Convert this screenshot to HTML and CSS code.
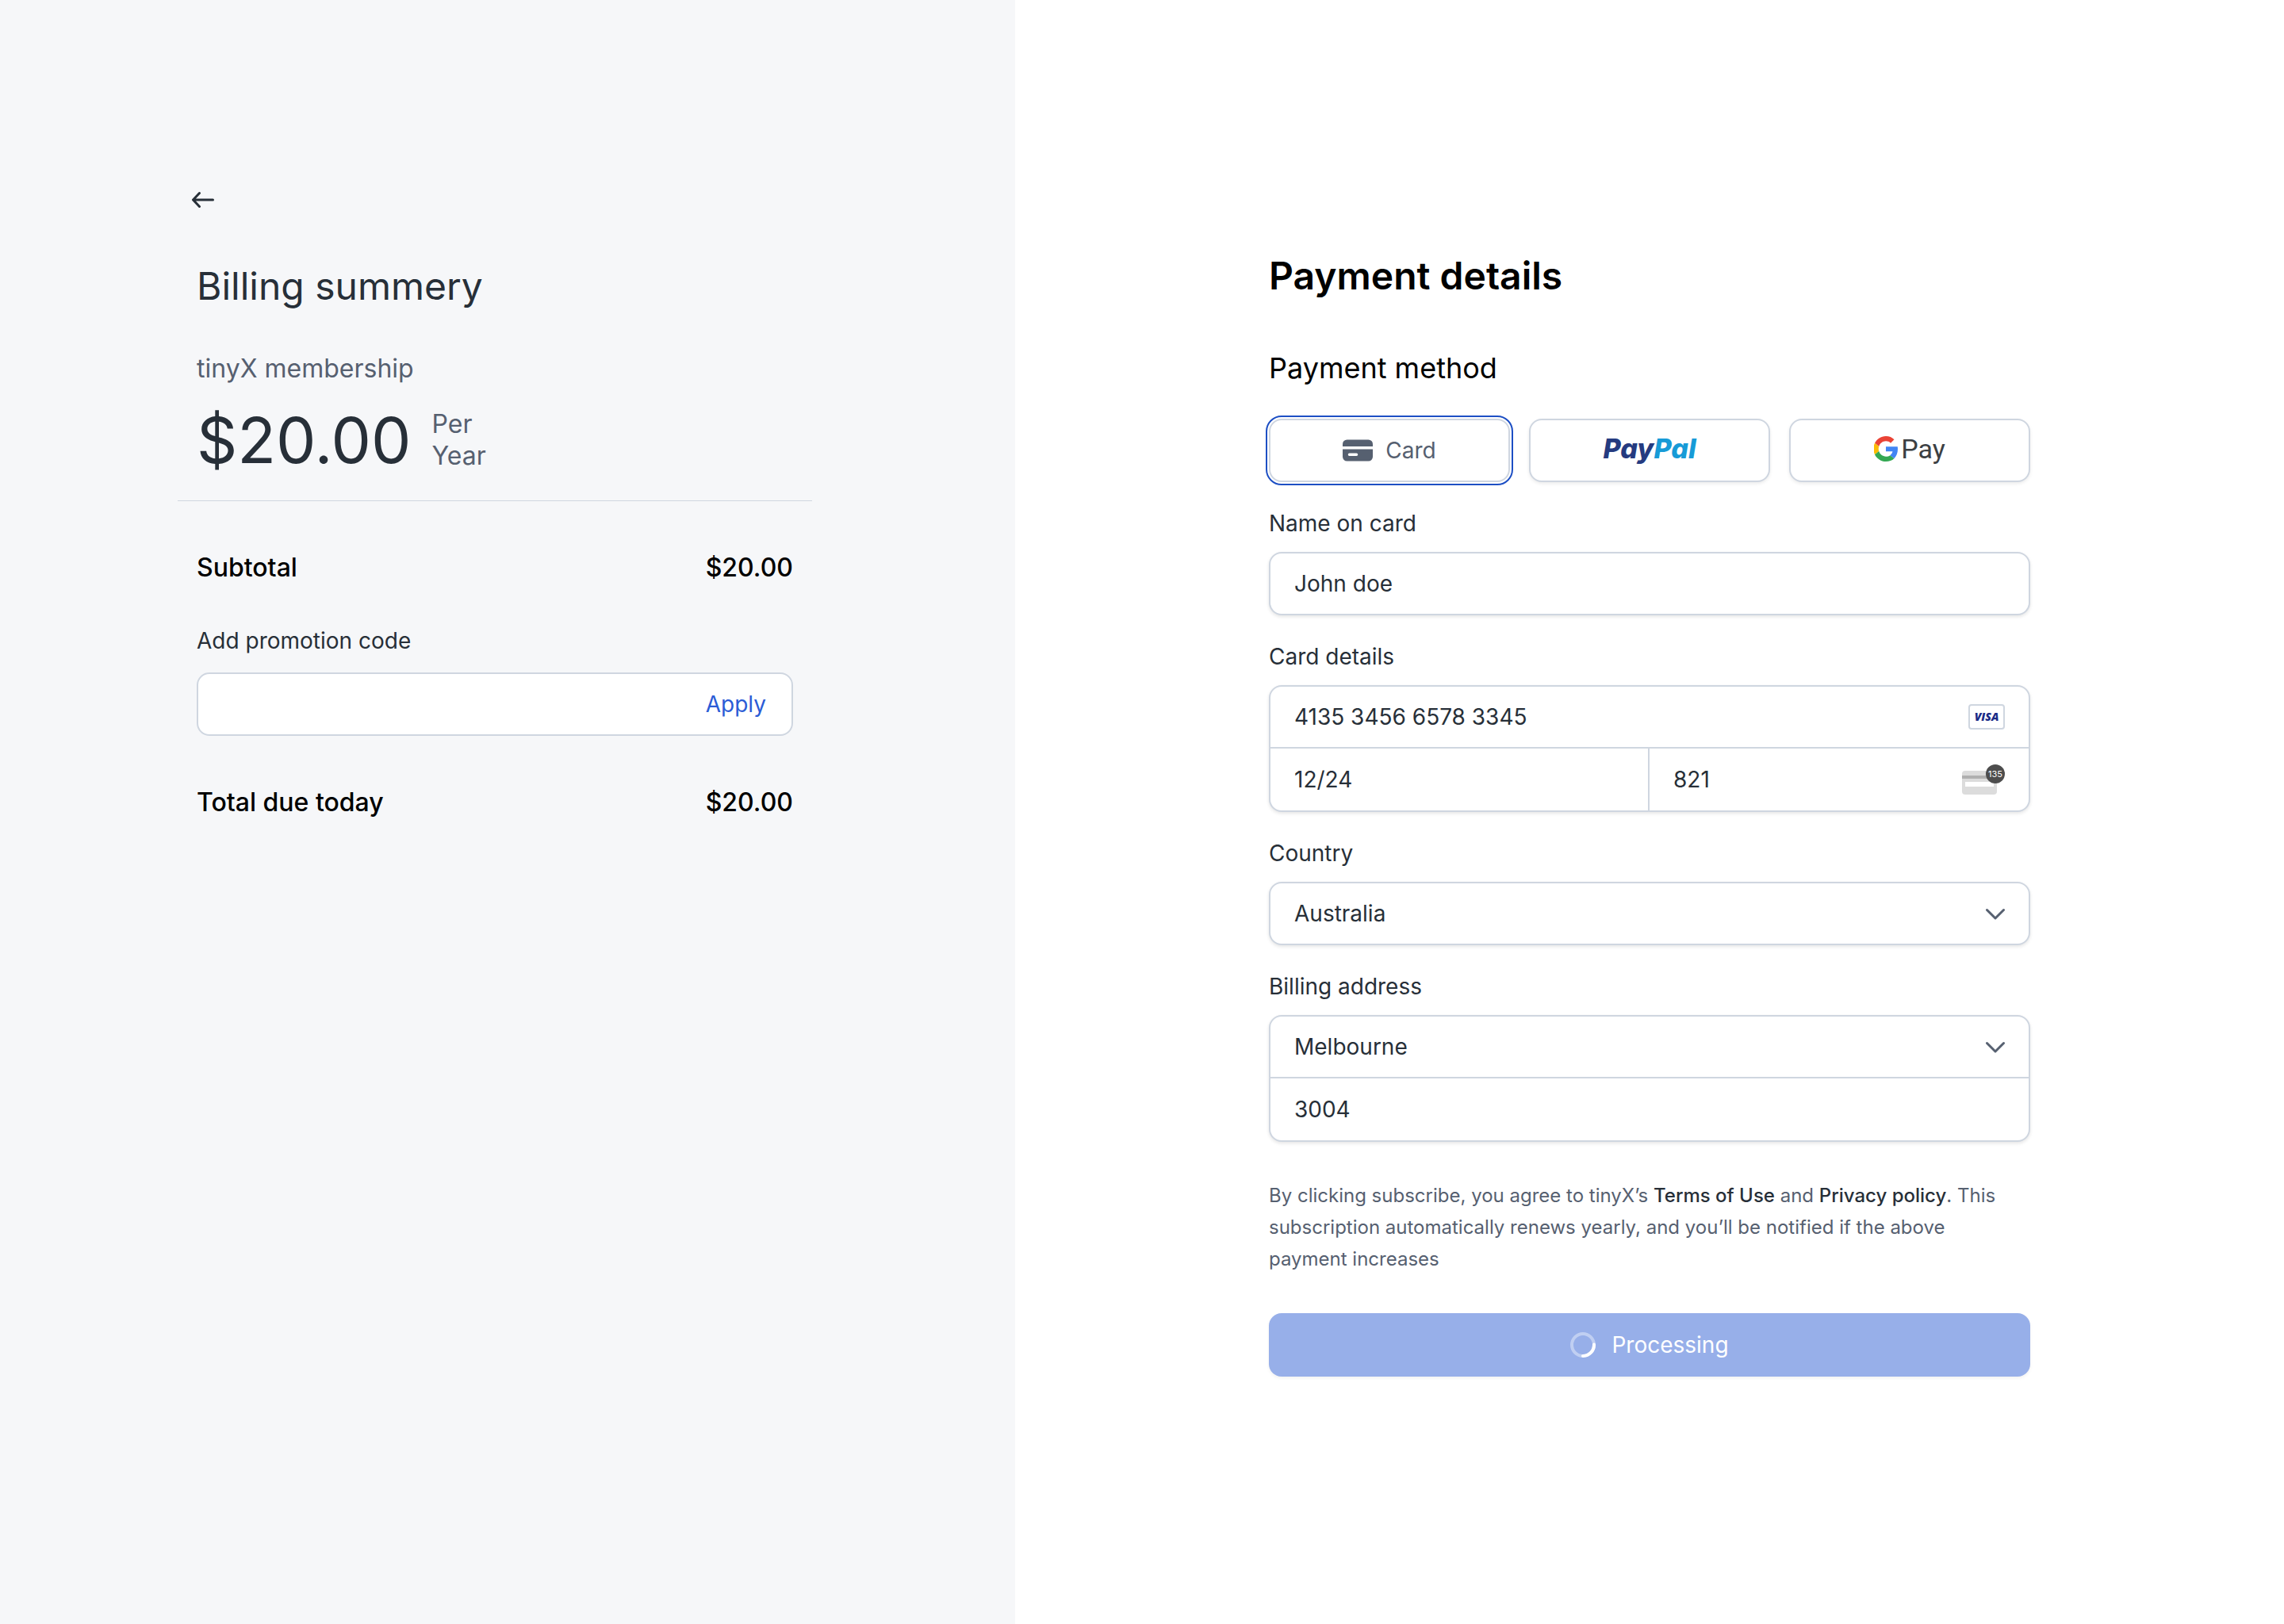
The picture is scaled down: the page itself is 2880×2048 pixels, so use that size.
FILE: index.html
```html
<!DOCTYPE html>
<html lang="en">
<head>
<meta charset="utf-8">
<meta name="viewport" content="width=device-width, initial-scale=1">
<title>tinyX checkout</title>
<link rel="stylesheet" href="styles.css">
</head>
<body>
<div class="checkout">
  <aside class="summary">
    <div class="summary-inner">
      <button class="back" type="button" aria-label="Go back">
        <svg width="48" height="48" viewBox="0 0 48 48" fill="none" stroke="currentColor" stroke-width="3" stroke-linecap="round" stroke-linejoin="round"><path d="M36.500 24H12M19.500 15.500 11.500 24l8 8.500"/></svg>
      </button>
      <h1 class="summary-title">Billing summery</h1>
      <p class="plan">tinyX membership</p>
      <div class="price">
        <span class="amount">$20.00</span>
        <span class="period">Per<br>Year</span>
      </div>
    </div>
    <hr class="rule">
    <div class="summary-inner">
      <div class="line"><span>Subtotal</span><span>$20.00</span></div>
      <div class="promo">
        <label class="label" for="promo">Add promotion code</label>
        <div class="promo-box">
          <input class="input" id="promo" type="text">
          <button class="apply" type="button">Apply</button>
        </div>
      </div>
      <div class="line"><span>Total due today</span><span>$20.00</span></div>
    </div>
  </aside>

  <main class="payment">
    <form class="form">
      <h2 class="form-title">Payment details</h2>
      <h3 class="form-subtitle">Payment method</h3>
      <div class="methods">
        <button class="method selected" type="button" aria-pressed="true">
          <svg width="38" height="28" viewBox="0 0 38 28" fill="currentColor"><path d="M0 9V6a5.500 5.500 0 0 1 5.500-5.500h27A5.500 5.500 0 0 1 38 6v3z"/><path fill-rule="evenodd" d="M0 12.500h38V22a5.500 5.500 0 0 1-5.500 5.500h-27A5.500 5.500 0 0 1 0 22zM8.500 17.500a1.750 1.750 0 0 0 0 3.500h9a1.750 1.750 0 0 0 0-3.500z"/></svg>
          Card
        </button>
        <button class="method paypal" type="button" aria-pressed="false">
          <span class="paypal-logo"><span class="paypal-pay">Pay</span><span class="paypal-pal">Pal</span></span>
        </button>
        <button class="method gpay" type="button" aria-pressed="false">
          <svg width="30" height="32" viewBox="1 0 46 48" preserveAspectRatio="none" role="img" aria-label="Google"><path fill="#ea4335" d="M24 9.500c3.540 0 6.710 1.220 9.210 3.600l6.850-6.850C35.900 2.380 30.470 0 24 0 14.620 0 6.510 5.380 2.560 13.220l7.980 6.190C12.430 13.720 17.740 9.500 24 9.500z"/><path fill="#4285f4" d="M46.980 24.550c0-1.570-.15-3.090-.38-4.550H24v9.020h12.940c-.58 2.960-2.260 5.480-4.780 7.180l7.730 6c4.510-4.180 7.090-10.360 7.090-17.650z"/><path fill="#fbbc05" d="M10.530 28.590c-.48-1.450-.76-2.990-.76-4.590s.27-3.140.76-4.590l-7.980-6.190C.92 16.460 0 20.120 0 24c0 3.880.92 7.540 2.560 10.780l7.970-6.190z"/><path fill="#34a853" d="M24 48c6.480 0 11.930-2.130 15.890-5.810l-7.730-6c-2.150 1.450-4.920 2.300-8.160 2.300-6.260 0-11.570-4.220-13.470-9.910l-7.980 6.190C6.510 42.620 14.620 48 24 48z"/></svg>
          <span class="gpay-word">Pay</span>
        </button>
      </div>

      <div class="field">
        <label class="label" for="name">Name on card</label>
        <div class="box">
          <div class="cell"><input class="input" id="name" type="text" value="John doe"></div>
        </div>
      </div>

      <div class="field">
        <label class="label" for="number">Card details</label>
        <div class="box">
          <div class="cell">
            <input class="input" id="number" type="text" value="4135 3456 6578 3345">
            <span class="visa">VISA</span>
          </div>
          <div class="split">
            <div class="cell"><input class="input" type="text" value="12/24" aria-label="Expiry date"></div>
            <div class="cell">
              <input class="input" type="text" value="821" aria-label="Security code">
              <svg class="cvc" width="54" height="38" viewBox="0 0 54 38"><rect y="8" width="44" height="30" rx="4" fill="#dcdcdc"/><path fill="#b0b0b0" d="M0 14h44v4H0z"/><path fill="#fff" d="M4 22h36v6H4z"/><circle cx="42" cy="12" r="12" fill="#4d4d4d"/><text x="42" y="16" text-anchor="middle" fill="#fff">135</text></svg>
            </div>
          </div>
        </div>
      </div>

      <div class="field">
        <label class="label" for="country">Country</label>
        <div class="box">
          <div class="cell select">
            <select class="input" id="country"><option>Australia</option></select>
            <svg class="chevron" width="24" height="16" viewBox="0 0 24 16"><path d="M1.500 3.500 12 14 22.500 3.500"/></svg>
          </div>
        </div>
      </div>

      <div class="field">
        <label class="label" for="city">Billing address</label>
        <div class="box">
          <div class="cell select">
            <select class="input" id="city"><option>Melbourne</option></select>
            <svg class="chevron" width="24" height="16" viewBox="0 0 24 16"><path d="M1.500 3.500 12 14 22.500 3.500"/></svg>
          </div>
          <div class="split single">
            <div class="cell"><input class="input" type="text" value="3004" aria-label="Postcode"></div>
          </div>
        </div>
      </div>

      <p class="terms">By clicking subscribe, you agree to tinyX’s <a href="#">Terms of Use</a> and <a href="#">Privacy policy</a>. This subscription automatically renews yearly, and you’ll be notified if the above payment increases</p>
      <button class="submit" type="submit">
        <svg width="32" height="32" viewBox="0 0 32 32" fill="none" stroke="#fff" stroke-width="4"><circle cx="16" cy="16" r="14" stroke-opacity=".4"/><path stroke-linecap="round" d="M30 15.500A14 14 0 0 1 16 30"/></svg>
        Processing
      </button>
    </form>
  </main>
</div>
</body>
</html>
```
FILE: styles.css
```css
:root {
  --ink: #272f38;
  --muted: #566070;
  --line: #cfd6e0;
  --blue: #2b5cd6;
}

* {
  box-sizing: border-box;
  margin: 0;
}

body {
  font: 400 28px/40px Inter, "Liberation Sans", sans-serif;
  font-optical-sizing: none;
  color: var(--ink);
  background: #fff;
}

svg {
  display: block;
  flex: none;
}

button {
  font: inherit;
  color: inherit;
  cursor: pointer;
}

.checkout {
  display: grid;
  grid-template-columns: 4fr 5fr;
  min-height: 100vh;
}

/* Order summary */

.summary {
  display: flex;
  flex-direction: column;
  padding: 228px 256px 64px 224px;
  background: #f6f7f9;
}

.summary-inner {
  display: flex;
  flex-direction: column;
  padding: 0 24px;
}

.back {
  align-self: flex-start;
  margin-left: -16px;
  padding: 0;
  border: 0;
  background: none;
}

.summary-title {
  margin-top: 57px;
  font-size: 48px;
  line-height: 56px;
  font-weight: 400;
}

.plan {
  margin-top: 56px;
  font-size: 32px;
  color: var(--muted);
}

.price {
  display: flex;
  align-items: center;
  gap: 26px;
  margin-top: 30px;
}

.amount {
  font-size: 80px;
  line-height: 80px;
}

.period {
  font-size: 32px;
  color: var(--muted);
}

.rule {
  width: 100%;
  height: 1px;
  margin: 36px 0 64px;
  border: 0;
  background: var(--line);
}

.line {
  display: flex;
  justify-content: space-between;
  font-size: 32px;
  font-weight: 500;
  color: #000;
}

.promo {
  display: flex;
  flex-direction: column;
  gap: 20px;
  margin: 52px 0 64px;
}

.promo-box {
  display: flex;
  align-items: center;
  height: 80px;
  padding: 0 32px 0 30px;
  border: 2px solid var(--line);
  border-radius: 16px;
  background: #fff;
}

.apply {
  padding: 0;
  border: 0;
  background: none;
  color: var(--blue);
}

/* Payment form */

.payment {
  padding: 320px 64px 64px;
}

.form {
  display: flex;
  flex-direction: column;
  max-width: 960px;
  margin: 0 auto;
}

.form-title {
  font-size: 48px;
  line-height: 56px;
  font-weight: 600;
  color: #000;
}

.form-subtitle {
  margin: 64px 0 40px;
  font-size: 36px;
  line-height: 48px;
  font-weight: 400;
  color: #000;
}

.methods {
  display: grid;
  grid-template-columns: repeat(3, 1fr);
  gap: 24px;
}

.method {
  display: flex;
  align-items: center;
  justify-content: center;
  gap: 16px;
  height: 80px;
  padding: 0;
  border: 2px solid var(--line);
  border-radius: 16px;
  background: #fff;
  color: var(--muted);
  box-shadow: 0 2px 4px rgba(0, 0, 0, .08);
}

.selected {
  outline: 2px solid #1d4fc4;
  outline-offset: 2px;
  box-shadow: none;
}

.paypal,
.gpay {
  padding-bottom: 4px;
}

.paypal-logo {
  font: italic 800 34px/40px Inter, "Liberation Sans", sans-serif;
}

.paypal-pay {
  color: #253b80;
}

.paypal-pal {
  color: #179bd7;
}

.gpay {
  gap: 4px;
}

.gpay-word {
  font: 400 34px/40px Roboto, sans-serif;
  color: #3c4043;
}

.field {
  display: flex;
  flex-direction: column;
  gap: 16px;
  margin-top: 32px;
}

.box {
  border: 2px solid var(--line);
  border-radius: 16px;
  background: #fff;
  box-shadow: 0 2px 4px rgba(0, 0, 0, .1);
}

.cell {
  display: flex;
  align-items: center;
  height: 76px;
  padding: 0 30px;
}

.split {
  display: grid;
  grid-template-columns: 1fr 1fr;
  border-top: 2px solid var(--line);
}

.split .cell {
  height: 78px;
}

.split .cell:first-child:not(:last-child) {
  border-right: 2px solid var(--line);
}

.single {
  grid-template-columns: 1fr;
}

.input {
  flex: 1;
  width: 100%;
  min-width: 0;
  height: 40px;
  padding: 0;
  border: 0;
  outline: 0;
  background: none;
  font: inherit;
  color: inherit;
  appearance: none;
}

.select {
  display: grid;
}

.select .input,
.select .chevron {
  grid-area: 1 / 1;
}

.chevron {
  justify-self: end;
  fill: none;
  stroke: var(--muted);
  stroke-width: 3;
  stroke-linecap: round;
  stroke-linejoin: round;
  pointer-events: none;
}

.visa {
  width: 46px;
  border: 2px solid var(--line);
  border-radius: 4px;
  font: italic 800 14px/28px "Open Sans", sans-serif;
  text-align: center;
  color: #1a2a86;
}

.cvc text {
  font-size: 11px;
}

.terms {
  margin: 48px 0;
  padding-right: 32px;
  font-size: 24px;
  color: var(--muted);
}

.terms a {
  font-weight: 500;
  color: var(--ink);
  text-decoration: none;
}

.submit {
  display: flex;
  align-items: center;
  justify-content: center;
  gap: 20px;
  height: 80px;
  border: 0;
  border-radius: 16px;
  background: #97afe9;
  color: #fff;
  box-shadow: 0 2px 4px rgba(0, 0, 0, .06);
}
```
